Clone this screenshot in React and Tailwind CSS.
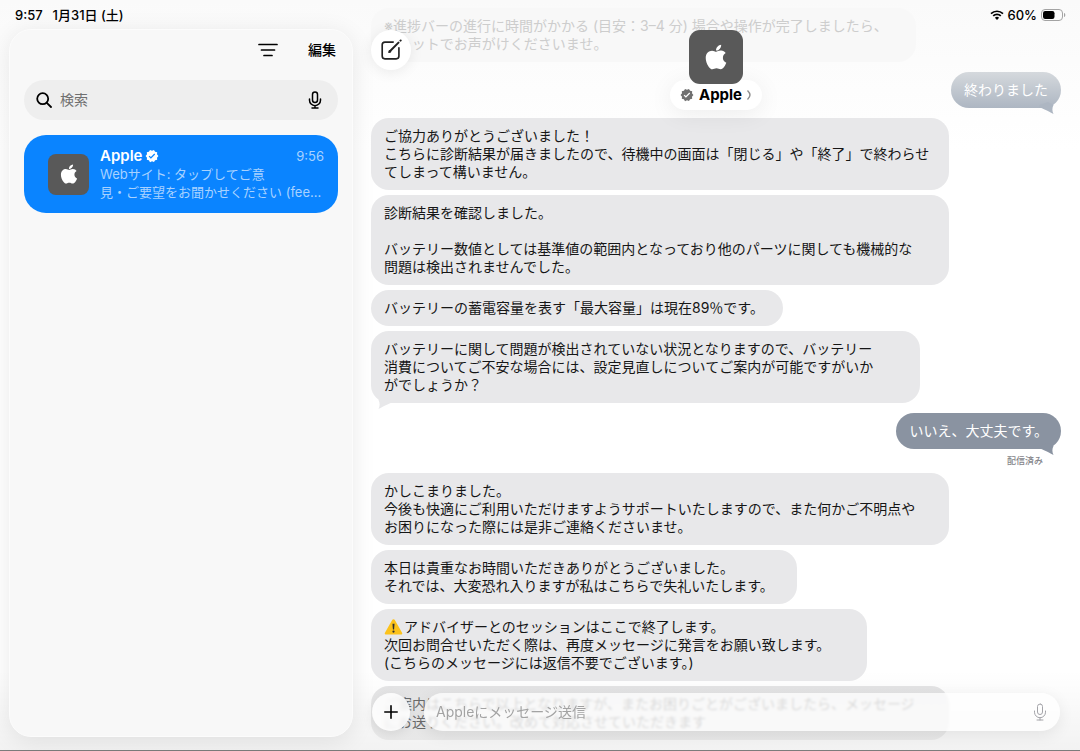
import { FaApple } from "react-icons/fa";
import { MdVerified } from "react-icons/md";

const messages = [
  {
    id: 1,
    text: "※進捗バーの進行に時間がかかる (目安：3–4 分) 場合や操作が完了しましたら、\nチャットでお声がけくださいませ。",
    width: "w-[545px]",
    faded: true,
  },
  { id: 2, text: "終わりました", mine: true, sending: true },
  {
    id: 3,
    text: "ご協力ありがとうございました！\nこちらに診断結果が届きましたので、待機中の画面は「閉じる」や「終了」で終わらせ\nてしまって構いません。",
    width: "w-[578px]",
  },
  {
    id: 4,
    text: "診断結果を確認しました。\n\nバッテリー数値としては基準値の範囲内となっており他のパーツに関しても機械的な\n問題は検出されませんでした。",
    width: "w-[578px]",
  },
  {
    id: 5,
    text: "バッテリーの蓄電容量を表す「最大容量」は現在89％です。",
    width: "w-[412px]",
  },
  {
    id: 6,
    text: "バッテリーに関して問題が検出されていない状況となりますので、バッテリー\n消費についてご不安な場合には、設定見直しについてご案内が可能ですがいか\nがでしょうか？",
    width: "w-[549px]",
    tail: true,
  },
  { id: 7, text: "いいえ、大丈夫です。", mine: true, status: "配信済み" },
  {
    id: 8,
    text: "かしこまりました。\n今後も快適にご利用いただけますようサポートいたしますので、また何かご不明点や\nお困りになった際には是非ご連絡くださいませ。",
    width: "w-[578px]",
  },
  {
    id: 9,
    text: "本日は貴重なお時間いただきありがとうございました。\nそれでは、大変恐れ入りますが私はこちらで失礼いたします。",
    width: "w-[426px]",
  },
  {
    id: 10,
    text: "アドバイザーとのセッションはここで終了します。\n次回お問合せいただく際は、再度メッセージに発言をお願い致します。\n(こちらのメッセージには返信不要でございます。)",
    width: "w-[496px]",
    warning: true,
  },
  {
    id: 11,
    text: "ご案内はこちらで以上となりますが、またお困りごとがございましたら、メッセージ\nにお送りください。改めて対応させていただきます",
    width: "w-[578px]",
    dimmed: true,
  },
];

function MicIcon({ className }) {
  return (
    <svg
      className={className}
      viewBox="0 0 14 18"
      fill="none"
      stroke="currentColor"
      strokeLinecap="round"
    >
      <rect x="4.5" y="1" width="5" height="10.5" rx="2.5" />
      <path d="M1.5 8v1.2a5.5 5.5 0 0011 0V8M7 14.7V17M4 17h6" />
    </svg>
  );
}

function WarningIcon() {
  return (
    <svg
      className="mr-px inline-block h-[18px] w-[19px] align-top"
      viewBox="0 0 20 18"
      role="img"
      aria-label="警告"
    >
      <path
        d="M10 .8c.7 0 1.100.4 1.400.9l7.600 13.300c.6 1.100 0 2-1.200 2H2.200c-1.200 0-1.800-.9-1.200-2L8.600 1.700c.3-.5.7-.9 1.400-.9z"
        fill="#fcc21b"
      />
      <path d="M8.900 5.500h2.200l-.5 6H9.400z" fill="#2f2f2f" />
      <circle cx="10" cy="13.800" r="1.200" fill="#2f2f2f" />
    </svg>
  );
}

function StatusIcons() {
  return (
    <div className="flex items-center gap-1 text-[13px] leading-[18px] font-medium">
      <svg className="h-[10px] w-[14px]" viewBox="0 0 14 10" fill="none">
        <path
          d="M1 3.700a8.600 8.600 0 0112 0M3.200 5.900a5.400 5.400 0 017.600 0"
          stroke="black"
          strokeWidth="1.7"
        />
        <path d="M7 10L4.900 7.800a3 3 0 014.200 0z" fill="black" />
      </svg>
      <span>60%</span>
      <svg className="h-3 w-[25px]" viewBox="0 0 25 12">
        <rect
          x=".5"
          y=".5"
          width="21"
          height="11"
          rx="3.500"
          fill="none"
          stroke="#a3a3a3"
        />
        <rect x="2" y="2" width="11.500" height="8" rx="2.200" />
        <path d="M23 4c1 .4 1.300 1.200 1.300 2s-.3 1.600-1.300 2z" fill="#a3a3a3" />
      </svg>
    </div>
  );
}

function AppleAvatar({ className, iconClassName }) {
  return (
    <div
      className={`flex shrink-0 items-center justify-center bg-[#595959] text-white ${className}`}
    >
      <FaApple className={iconClassName} />
    </div>
  );
}

function Message({ message }) {
  const { text, width, mine, sending, status, tail, faded, dimmed, warning } =
    message;

  if (mine) {
    return (
      <li
        className={`flex flex-col items-end ${status ? "mt-[5px]" : "my-[5px]"}`}
      >
        <div
          className={`relative rounded-[18px] px-[13px] py-[9px] text-white ${
            sending
              ? "bg-linear-to-b from-[#d5d9dd] to-[#adb6c2]"
              : "bg-[#8a93a1]"
          }`}
        >
          {text}
          <svg
            className={`absolute right-[6px] -bottom-[6px] h-3 w-4 ${
              sending ? "text-[#adb6c2]" : "text-[#8a93a1]"
            }`}
            viewBox="0 0 16 12"
            fill="currentColor"
          >
            <path d="M0 5.500c4 .8 7.500 3 14.500 6.500C13 9 13 6 14.500 3L9 0 0 3z" />
          </svg>
        </div>
        {status && (
          <span className="mt-1 mr-[18px] text-[9px] leading-[15px] font-medium text-[#85858a]">
            {status}
          </span>
        )}
      </li>
    );
  }

  return (
    <li
      className={`relative max-w-full rounded-[18px] px-[13px] py-[9px] whitespace-pre-line ${width} ${
        faded
          ? "bg-[#f8f8f8] text-[#cdcdcd]"
          : dimmed
            ? "bg-linear-to-b from-[#e3e3e4] to-[#e8e8e8] text-[#6a6a6a]"
            : "bg-[#e8e8ea] text-[#161616]"
      }`}
    >
      {warning && <WarningIcon />}
      {text}
      {tail && (
        <svg
          className="absolute -bottom-[6px] left-[6px] h-3 w-4 text-[#e8e8ea]"
          viewBox="0 0 16 12"
          fill="currentColor"
        >
          <path d="M16 5.500C12 6.300 8.500 8.500 1.500 12 3 9 3 6 1.500 3L7 0l9 3z" />
        </svg>
      )}
    </li>
  );
}

function Sidebar() {
  return (
    <aside className="relative flex w-[362px] shrink-0 flex-col px-[9px] pb-[13px]">
      <div className="flex h-[29px] items-center gap-2.5 px-1.5 text-[13px] leading-[18px] font-medium">
        <span>9:57</span>
        <span>1月31日 (土)</span>
      </div>
      <div className="flex-1 rounded-[22px] border border-[#fcfcfc] bg-[#f8f8f8] px-[14px] shadow-[0_4px_24px_rgba(0,0,0,0.09)]">
        <div className="flex h-10 items-center justify-end gap-[30px] pr-0.5">
          <button type="button" aria-label="フィルタ">
            <svg
              className="h-3.5 w-5"
              viewBox="0 0 20 14"
              stroke="currentColor"
              strokeWidth="1.700"
              strokeLinecap="round"
            >
              <path d="M1 1.500h18M3.500 7h13M6 12.500h8" />
            </svg>
          </button>
          <button type="button" className="text-sm font-medium">
            編集
          </button>
        </div>
        <div className="mt-2.5 flex h-10 items-center rounded-full bg-[#eeeeee] px-3">
          <svg
            className="h-4 w-4 shrink-0"
            viewBox="0 0 16 16"
            fill="none"
            stroke="currentColor"
            strokeWidth="1.800"
            strokeLinecap="round"
          >
            <circle cx="6.700" cy="6.700" r="5.500" />
            <path d="M10.800 10.800L15 15" />
          </svg>
          <input
            type="text"
            aria-label="検索"
            placeholder="検索"
            className="mx-2 min-w-0 flex-1 bg-transparent text-sm outline-none placeholder:text-[#707070]"
          />
          <button type="button" aria-label="音声入力" className="mr-1">
            <MicIcon className="h-[18px] w-3.5 stroke-[1.500]" />
          </button>
        </div>
        <button
          type="button"
          className="mt-[15px] flex h-[78px] w-full items-center gap-[11px] rounded-[22px] bg-[#0a84ff] pr-[14px] pl-6 text-left text-white"
        >
          <AppleAvatar
            className="h-[41px] w-[41px] rounded-[8px]"
            iconClassName="h-[22px] w-[22px]"
          />
          <div className="min-w-0 flex-1 text-[13px] leading-[18px] text-[#a8d2ff]">
            <div className="flex items-center text-[15px]">
              <span className="font-semibold text-white">Apple</span>
              <MdVerified className="ml-[3px] h-[14px] w-[14px] text-white" />
              <span className="ml-auto text-[13px]">9:56</span>
            </div>
            <p>Webサイト: タップしてご意</p>
            <p>見・ご要望をお聞かせください (fee...</p>
          </div>
        </button>
      </div>
    </aside>
  );
}

function ChatHeader() {
  return (
    <header className="absolute inset-x-0 top-0 pr-[19px] pl-[9px]">
      <div className="absolute top-1.5 right-[14px]">
        <StatusIcons />
      </div>
      <div className="grid grid-cols-[1fr_auto_1fr] items-start pt-[30px]">
        <button
          type="button"
          aria-label="新規メッセージ"
          className="flex h-10 w-10 items-center justify-center rounded-full bg-white shadow-[0_2px_14px_rgba(0,0,0,0.08)]"
        >
          <svg
            className="h-[22px] w-[22px]"
            viewBox="0 0 20 20"
            fill="none"
            stroke="#222"
            strokeWidth="1.500"
            strokeLinecap="round"
            strokeLinejoin="round"
          >
            <path d="M12 2.800H4.500A2.500 2.500 0 002 5.300v10.200A2.500 2.500 0 004.500 18h10.200a2.500 2.500 0 002.500-2.500V8" />
            <path d="M9 11.200l7.800-7.900M18.600 1.500l.2-.2" strokeWidth="1.800" />
            <path d="M8.200 12l.5-1.300.8.800z" />
          </svg>
        </button>
        <div className="flex flex-col items-center">
          <AppleAvatar
            className="z-10 h-[54px] w-[54px] rounded-[11px]"
            iconClassName="h-7 w-7"
          />
          <button
            type="button"
            className="-mt-1 flex h-[30px] items-center rounded-full bg-white px-2.5 shadow-[0_4px_24px_rgba(0,0,0,0.07)]"
          >
            <MdVerified className="h-[14px] w-[14px] text-[#707070]" />
            <span className="ml-[5px] text-[15px] leading-[18px] font-bold">
              Apple
            </span>
            <svg
              className="ml-1 h-2.5 w-1.5"
              viewBox="0 0 6 10"
              fill="none"
              stroke="#8c8c8c"
              strokeWidth="1.400"
            >
              <path d="M1.500 .5C3 2 4 3.500 4 5S3 8 1.500 9.500" />
            </svg>
          </button>
        </div>
      </div>
    </header>
  );
}

function Composer() {
  return (
    <form
      className="absolute inset-x-0 bottom-[19px] flex items-center gap-3.5 pr-5 pl-2.5"
      onSubmit={(e) => e.preventDefault()}
    >
      <button
        type="button"
        aria-label="追加"
        className="flex h-[38px] w-[38px] shrink-0 items-center justify-center rounded-full bg-white/85 shadow-[0_3px_12px_rgba(0,0,0,0.08)] backdrop-blur-[2px]"
      >
        <svg
          className="h-3.5 w-3.5"
          viewBox="0 0 14 14"
          stroke="black"
          strokeWidth="1.600"
          strokeLinecap="round"
        >
          <path d="M7 .8v12.400M.8 7h12.400" />
        </svg>
      </button>
      <div className="flex h-[38px] flex-1 items-center rounded-full bg-white/75 pr-[13px] pl-3 shadow-[0_4px_16px_rgba(0,0,0,0.08)] backdrop-blur-[1px]">
        <input
          type="text"
          aria-label="Appleにメッセージ送信"
          placeholder="Appleにメッセージ送信"
          className="min-w-0 flex-1 bg-transparent text-sm outline-none placeholder:text-[#a3a3a3]"
        />
        <button type="button" aria-label="音声入力">
          <MicIcon className="h-[18px] w-3.5 text-[#a3a3a8]" />
        </button>
      </div>
    </form>
  );
}

export default function App() {
  return (
    <div className="relative flex min-h-screen border-b border-[#7c7c7c] bg-linear-to-b from-[#fafafa] via-white via-20% to-white font-['Inter','Noto_Sans_CJK_JP',sans-serif] text-black">
      {/* Shade along the bottom edge, behind both columns */}
      <div className="pointer-events-none absolute inset-x-0 bottom-0 h-20 bg-linear-to-b from-transparent to-black/5" />
      <Sidebar />
      <main className="relative min-w-0 flex-1">
        <ul
          lang="ja"
          className="flex flex-col gap-[5px] pt-2 pr-[19px] pb-2.5 pl-[9px] text-sm leading-[18px]"
        >
          {messages.map((message) => (
            <Message key={message.id} message={message} />
          ))}
        </ul>
        <ChatHeader />
        <Composer />
      </main>
    </div>
  );
}
